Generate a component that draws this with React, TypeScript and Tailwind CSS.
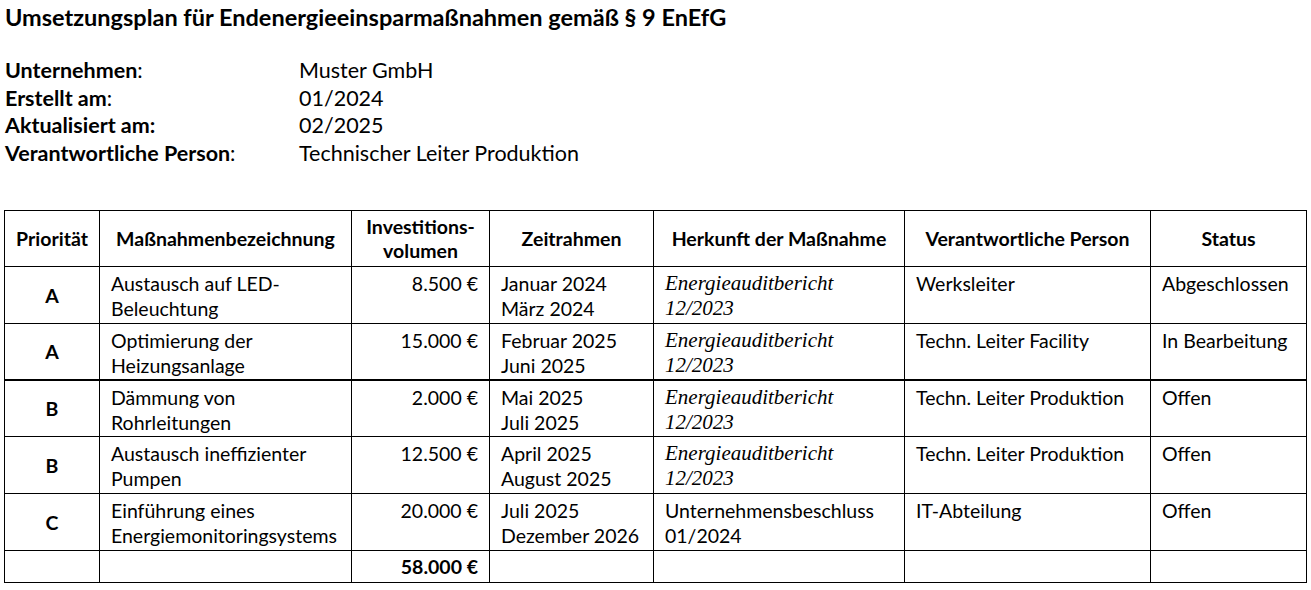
import React from "react";

const sans = "font-['Lato','Noto_Sans',sans-serif]";

type Row = {
  p: string;
  name: [string, string];
  inv: string;
  time: [string, string];
  origin: [string, string];
  italic: boolean;
  person: string;
  status: string;
  thickBottom?: boolean;
};

const rows: Row[] = [
  { p: "A", name: ["Austausch auf LED-", "Beleuchtung"], inv: "8.500 €", time: ["Januar 2024", "März 2024"], origin: ["Energieauditbericht", "12/2023"], italic: true, person: "Werksleiter", status: "Abgeschlossen" },
  { p: "A", name: ["Optimierung der", "Heizungsanlage"], inv: "15.000 €", time: ["Februar 2025", "Juni 2025"], origin: ["Energieauditbericht", "12/2023"], italic: true, person: "Techn. Leiter Facility", status: "In Bearbeitung", thickBottom: true },
  { p: "B", name: ["Dämmung von", "Rohrleitungen"], inv: "2.000 €", time: ["Mai 2025", "Juli 2025"], origin: ["Energieauditbericht", "12/2023"], italic: true, person: "Techn. Leiter Produktion", status: "Offen" },
  { p: "B", name: ["Austausch ineffizienter", "Pumpen"], inv: "12.500 €", time: ["April 2025", "August 2025"], origin: ["Energieauditbericht", "12/2023"], italic: true, person: "Techn. Leiter Produktion", status: "Offen" },
  { p: "C", name: ["Einführung eines", "Energiemonitoringsystems"], inv: "20.000 €", time: ["Juli 2025", "Dezember 2026"], origin: ["Unternehmensbeschluss", "01/2024"], italic: false, person: "IT-Abteilung", status: "Offen" },
];

export default function App() {
  return (
    <div className={`bg-white text-black ${sans} w-[1311px] h-[590px] overflow-hidden pl-[5px] pt-[2px]`}>
      <h1 className="text-[23.5px] font-bold leading-[30px] whitespace-nowrap">
        Umsetzungsplan für Endenergieeinsparmaßnahmen gemäß § 9 EnEfG
      </h1>
      <div className="mt-[25px] grid grid-cols-[294px_1fr] text-[21.5px] leading-[27.5px]">
        <div><span className="font-bold">Unternehmen</span>:</div>
        <div>Muster GmbH</div>
        <div><span className="font-bold">Erstellt am</span>:</div>
        <div>01/2024</div>
        <div><span className="font-bold">Aktualisiert am:</span></div>
        <div>02/2025</div>
        <div><span className="font-bold">Verantwortliche Person</span>:</div>
        <div>Technischer Leiter Produktion</div>
      </div>
      <table className="mt-[43px] -ml-[1px] border-collapse table-fixed w-[1302px] text-[19.5px] leading-[25px]">
        <colgroup>
          <col className="w-[95px]" />
          <col className="w-[252px]" />
          <col className="w-[138px]" />
          <col className="w-[164px]" />
          <col className="w-[251px]" />
          <col className="w-[246px]" />
          <col className="w-[156px]" />
        </colgroup>
        <thead>
          <tr className="h-[56px] font-bold">
            <th className="border border-black px-[4px] text-center align-middle">Priorität</th>
            <th className="border border-black px-[4px] text-center align-middle">Maßnahmenbezeichnung</th>
            <th className="border border-black px-[4px] text-center align-middle leading-[24px]">Investitions-<br />volumen</th>
            <th className="border border-black px-[4px] text-center align-middle">Zeitrahmen</th>
            <th className="border border-black px-[4px] text-center align-middle">Herkunft der Maßnahme</th>
            <th className="border border-black px-[4px] text-center align-middle">Verantwortliche Person</th>
            <th className="border border-black px-[4px] text-center align-middle">Status</th>
          </tr>
        </thead>
        <tbody>
          {rows.map((r, i) => {
            const b = r.thickBottom ? "border border-black border-b-2" : "border border-black";
            return (
              <tr key={i} className={r.thickBottom ? "h-[56px]" : "h-[57px]"}>
                <td className={`${b} text-center align-middle font-bold`}>{r.p}</td>
                <td className={`${b} px-[11px] pt-[4px] align-top whitespace-nowrap`}>{r.name[0]}<br />{r.name[1]}</td>
                <td className={`${b} px-[11px] pt-[4px] align-top text-right`}>{r.inv}</td>
                <td className={`${b} px-[11px] pt-[4px] align-top whitespace-nowrap`}>{r.time[0]}<br />{r.time[1]}</td>
                <td className={`${b} px-[11px] pt-[4px] align-top whitespace-nowrap ${r.italic ? "font-['Liberation_Serif',serif] italic text-[21px]" : ""}`}>{r.origin[0]}<br />{r.origin[1]}</td>
                <td className={`${b} px-[11px] pt-[4px] align-top whitespace-nowrap`}>{r.person}</td>
                <td className={`${b} px-[11px] pt-[4px] align-top whitespace-nowrap`}>{r.status}</td>
              </tr>
            );
          })}
          <tr className="h-[32px]">
            <td className="border border-black"></td>
            <td className="border border-black"></td>
            <td className="border border-black px-[11px] text-right font-bold align-middle">58.000 €</td>
            <td className="border border-black"></td>
            <td className="border border-black"></td>
            <td className="border border-black"></td>
            <td className="border border-black"></td>
          </tr>
        </tbody>
      </table>
    </div>
  );
}
